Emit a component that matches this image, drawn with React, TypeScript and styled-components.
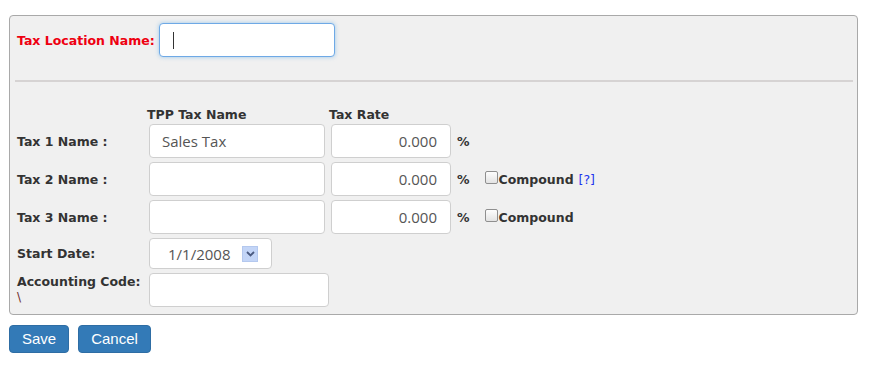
import React from "react";
import styled, { createGlobalStyle } from "styled-components";

const Global = createGlobalStyle`
  html, body { margin: 0; padding: 0; background: #fff; }
  body { font-family: "DejaVu Sans", Verdana, sans-serif; }
`;

const Page = styled.div`
  padding: 15px 17px 0 9px;
  width: 849px;
`;

const Panel = styled.div`
  border: 1px solid #a9a9a9;
  border-radius: 4px;
  background: #f0f0f0;
  padding: 7px 0 7px 0;
`;

const TopRow = styled.div`
  display: flex;
  align-items: center;
  gap: 4px;
  padding-left: 7px;
`;

const RedLabel = styled.label`
  color: #ee0010;
  font-weight: bold;
  font-size: 12.5px;
`;

const Separator = styled.div`
  height: 2px;
  background: #d6d3d3;
  margin: 23px 4px 0 5px;
`;

const Grid = styled.div`
  display: grid;
  grid-template-columns: 126px 176px 120px auto 1fr;
  column-gap: 6px;
  row-gap: 4px;
  padding-left: 7px;
  margin-top: 26px;
  align-items: center;
`;

const Header = styled.div`
  font-weight: bold;
  font-size: 12.5px;
  color: #333;
  margin-left: -2px;
  line-height: 14px;
  margin-bottom: -2px;
`;

const Label = styled.label<{ top?: boolean }>`
  font-weight: bold;
  font-size: 12.5px;
  color: #333;
  align-self: ${(p) => (p.top ? "start" : "center")};
  padding-top: ${(p) => (p.top ? "1px" : "0")};
  line-height: 15px;
`;

const Slash = styled.div`
  font-weight: normal;
  color: #6b2b2b;
  font-size: 12px;
  margin-top: 1px;
`;

const TextInput = styled.input<{ align?: string; w?: number }>`
  box-sizing: border-box;
  width: ${(p) => (p.w ? `${p.w}px` : "100%")};
  height: 34px;
  border: 1px solid #cfcfcf;
  border-radius: 4px;
  background: #fff;
  padding: 0 13px 0 12px;
  font-family: "Open Sans", "DejaVu Sans", sans-serif;
  font-size: 15px;
  color: #555;
  text-align: ${(p) => p.align || "left"};
  outline: none;
`;

const Caret = styled.span`
  display: inline-block;
  width: 1px;
  height: 17px;
  background: #333;
`;

const FocusBox = styled.div`
  box-sizing: border-box;
  width: 176px;
  height: 34px;
  border: 1px solid #6ea9e6;
  box-shadow: 0 0 4px rgba(102, 175, 233, 0.6);
  border-radius: 4px;
  background: #fff;
  display: flex;
  align-items: center;
  padding-left: 13px;
`;

const Pct = styled.span`
  font-weight: bold;
  font-size: 12.5px;
  color: #333;
`;

const Compound = styled.span`
  display: flex;
  align-items: center;
  font-weight: bold;
  font-size: 12.5px;
  color: #333;
  margin-left: 15px;
`;

const Check = styled.span`
  box-sizing: border-box;
  width: 13px;
  height: 13px;
  border: 1px solid #8f8f8f;
  border-radius: 2px;
  background: linear-gradient(#fdfdfd, #e3e3e3);
  margin-right: 1px;
  margin-top: -3px;
`;

const Help = styled.a`
  color: #2233ee;
  font-weight: normal;
  margin-left: 5px;
  text-decoration: none;
`;

const PctCell = styled.div`
  display: flex;
  align-items: center;
`;

const SelectBox = styled.div`
  box-sizing: border-box;
  width: 123px;
  height: 31px;
  border: 1px solid #cfcfcf;
  border-radius: 4px;
  background: #fff;
  display: flex;
  align-items: center;
  padding-left: 18px;
  font-family: "Open Sans", "DejaVu Sans", sans-serif;
  font-size: 15px;
  color: #555;
  gap: 12px;
`;

const Arrow = styled.span`
  width: 16px;
  height: 16px;
  background: #c3d5f7;
  border: 1px solid #b4c8ee;
  box-sizing: border-box;
  display: flex;
  align-items: center;
  justify-content: center;
`;

const Buttons = styled.div`
  display: flex;
  gap: 9px;
  margin-top: 10px;
`;

const Button = styled.button<{ w: number }>`
  box-sizing: border-box;
  width: ${(p) => p.w}px;
  height: 28px;
  background: #337ab7;
  border: 1px solid #2e6da4;
  border-radius: 4px;
  color: #fff;
  font-family: "Liberation Sans", Arial, sans-serif;
  font-size: 15px;
  padding: 0 0 2px;
`;

export default function App() {
  return (
    <>
      <Global />
      <Page>
        <Panel>
          <TopRow>
            <RedLabel>Tax Location Name:</RedLabel>
            <FocusBox>
              <Caret />
            </FocusBox>
          </TopRow>
          <Separator />
          <Grid>
            <div />
            <Header>TPP Tax Name</Header>
            <Header>Tax Rate</Header>
            <div />
            <div />

            <Label>Tax 1 Name :</Label>
            <TextInput defaultValue="Sales Tax" />
            <TextInput align="right" defaultValue="0.000" />
            <PctCell>
              <Pct>%</Pct>
            </PctCell>
            <div />

            <Label>Tax 2 Name :</Label>
            <TextInput />
            <TextInput align="right" defaultValue="0.000" />
            <PctCell>
              <Pct>%</Pct>
              <Compound>
                <Check />
                Compound<Help>[?]</Help>
              </Compound>
            </PctCell>
            <div />

            <Label>Tax 3 Name :</Label>
            <TextInput />
            <TextInput align="right" defaultValue="0.000" />
            <PctCell>
              <Pct>%</Pct>
              <Compound>
                <Check />
                Compound
              </Compound>
            </PctCell>
            <div />

            <Label>Start Date:</Label>
            <SelectBox>
              1/1/2008
              <Arrow>
                <svg width="9" height="6" viewBox="0 0 9 6">
                  <path d="M1 1 L4.5 4.5 L8 1" stroke="#4a5a80" strokeWidth="1.8" fill="none" />
                </svg>
              </Arrow>
            </SelectBox>
            <div />
            <div />
            <div />

            <Label top>
              Accounting Code:
              <Slash>\</Slash>
            </Label>
            <TextInput w={180} />
            <div />
            <div />
            <div />
          </Grid>
        </Panel>
        <Buttons>
          <Button w={60}>Save</Button>
          <Button w={73}>Cancel</Button>
        </Buttons>
      </Page>
    </>
  );
}
